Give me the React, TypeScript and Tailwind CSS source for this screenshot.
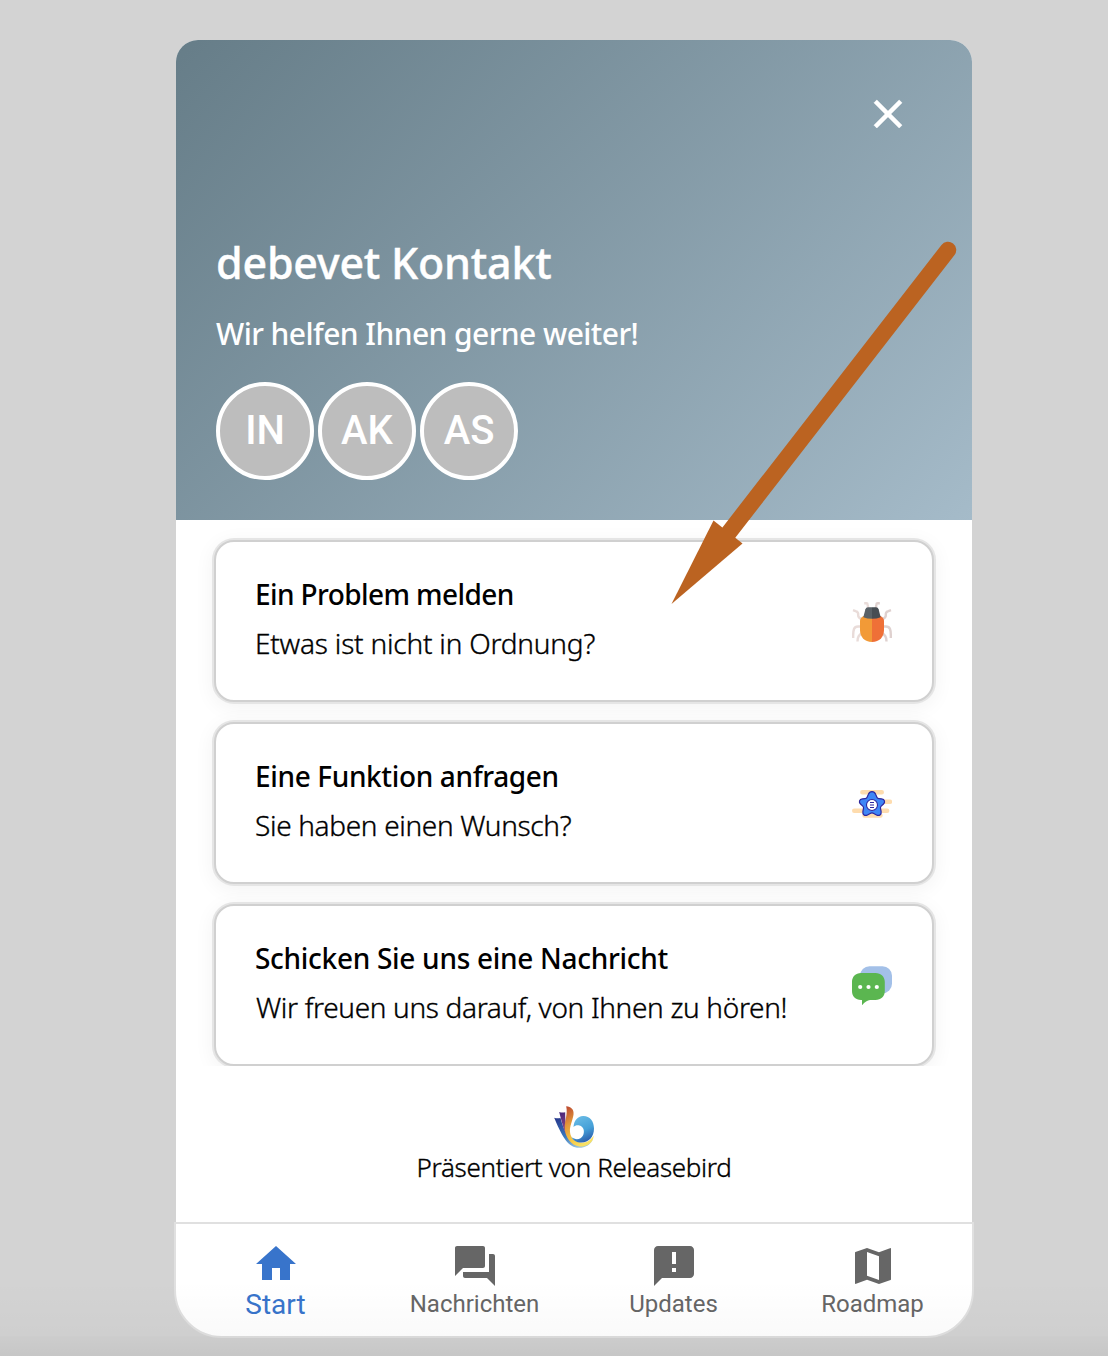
import React from "react";

const cards = [
  {
    title: "Ein Problem melden",
    titleClass: "-ml-px tracking-[-0.6px]",
    text: "Etwas ist nicht in Ordnung?",
    textClass: "-ml-px tracking-[-0.2px]",
    icon: <BugIcon />,
  },
  {
    title: "Eine Funktion anfragen",
    titleClass: "-ml-px tracking-[-0.36px]",
    text: "Sie haben einen Wunsch?",
    textClass: "-ml-px tracking-[-0.33px]",
    icon: <StarIcon />,
  },
  {
    title: "Schicken Sie uns eine Nachricht",
    titleClass: "-ml-px tracking-[-0.29px]",
    text: "Wir freuen uns darauf, von Ihnen zu hören!",
    textClass: "tracking-[-0.33px]",
    icon: <ChatIcon />,
  },
];

const tabs = [
  { label: "Nachrichten", path: "M21 6h-2v9H6v2c0 .55.45 1 1 1h11l4 4V7c0-.55-.45-1-1-1zm-4 6V3c0-.55-.45-1-1-1H3c-.55 0-1 .45-1 1v14l4-4h10c.55 0 1-.45 1-1z" },
  { label: "Updates", path: "M20 2H4c-1.1 0-2 .9-2 2v18l4-4h14c1.1 0 2-.9 2-2V4c0-1.1-.9-2-2-2zm-7 13h-2v-2h2v2zm0-4h-2V5h2v6z" },
  { label: "Roadmap", path: "M20.8 3L15 5.1 9 3 3.2 4.95 3 5.2v15.6l.2.2L9 18.9l6 2.1 5.8-1.95.2-.25V3.2L20.8 3zM15 19l-6-2.11V5l6 2.11V19z" },
];

function BugIcon() {
  return (
    <svg viewBox="0 0 40 40" className="size-10" fill="none">
      <g stroke="#e9dcd9" strokeWidth="2.4" strokeLinejoin="round">
        <path d="M12.2 1.2h2.3q1 0 1.1 1.2l.6 4" />
        <path d="M10 17q-4-1-3.8-4t-2-3.6L1 8.2" />
        <path d="M9 24.5H6q-3 0-4 2.5T1.2 36" />
        <path d="M10 31.5q-4.5 1.5-4.500 8" />
      </g>
      <g stroke="#dfd1cf" strokeWidth="2.4" strokeLinejoin="round">
        <path d="M27.8 1.2h-2.3q-1 0-1.1 1.2l-.6 4" />
        <path d="M30 17q4-1 3.8-4t2-3.6L39 8.2" />
        <path d="M31 24.5h3q3 0 4 2.5t.8 9" />
        <path d="M30 31.5q4.5 1.500 4.500 8" />
      </g>
      <path d="M20 14h-8.500Q8 16 8 19v9c0 7 4.500 12 12 12z" fill="#f29a37" />
      <path d="M20 14h8.500Q32 16 32 19v9c0 7-4.500 12-12 12z" fill="#ef7037" />
      <path d="M20 5.3h-4q-2 0-2.600 2l-2.100 8q4 1.500 8.700 1.500z" fill="#596167" />
      <path d="M20 5.3h4q2 0 2.600 2l2.100 8q-4 1.500-8.700 1.500z" fill="#464d53" />
    </svg>
  );
}

function StarIcon() {
  return (
    <svg viewBox="0 0 40 40" className="size-10" fill="none">
      <g stroke="#fedcae" strokeWidth="4.4" strokeLinecap="round">
        <path d="M10.300 8.200h19.500M9 17.800h29M2.200 26.800h33M12.500 31.600h16" />
      </g>
      <path
        d="M20 7.600c2 0 3 1 3.600 2.600l1.300 3c.4.900 1 1.300 2 1.400l2.700.3c3.200.4 3.800 3.300 1.900 5.100l-2.300 2.100c-.7.700-.9 1.400-.7 2.300l.6 3c.6 3.200-2 5-4.600 3.500l-2.700-1.500c-1.200-.7-2.400-.7-3.600 0l-2.700 1.500c-2.600 1.500-5.200-.3-4.600-3.500l.6-3c.2-.9 0-1.600-.7-2.300l-2.300-2.100c-1.900-1.800-1.300-4.700 1.900-5.100l2.700-.3c1-.1 1.600-.5 2-1.400l1.300-3C17 8.600 18 7.600 20 7.600z"
        fill="#3f86f6"
        stroke="#2d279f"
        strokeWidth="1.2"
      />
      <circle cx="20" cy="21" r="5.5" fill="#fff" stroke="#2d279f" strokeWidth="1.1" />
      <path d="M18 18.500h4M18 21h4M18 23.500h4" stroke="#2d279f" strokeWidth="1.2" />
    </svg>
  );
}

function ChatIcon() {
  return (
    <svg viewBox="0 0 40 40" className="size-10">
      <rect x="8" y=".3" width="32" height="27" rx="9.5" fill="#a3c0e8" />
      <path d="M9 7h14.500c5.500 0 9.300 3.800 9.300 9v9c0 5.300-3.800 9-9.300 9H18c-2.500.4-5.200 2-8 5.200V34H9c-5.400 0-9-3.700-9-9v-9c0-5.200 3.600-9 9-9z" fill="#5bb650" />
      <g fill="#fff">
        <circle cx="8.2" cy="21" r="2.1" />
        <circle cx="16.5" cy="21" r="2.1" />
        <circle cx="24.8" cy="21" r="2.1" />
      </g>
    </svg>
  );
}

function BirdLogo() {
  return (
    <svg viewBox="0 0 40 42" className="h-[42px] w-10">
      <defs>
        <linearGradient id="flame" x1="0" y1="0" x2=".5" y2="1">
          <stop offset="0" stopColor="#b8412f" />
          <stop offset=".4" stopColor="#e29639" />
          <stop offset=".8" stopColor="#f6ca45" />
          <stop offset="1" stopColor="#f8e063" />
        </linearGradient>
        <linearGradient id="body" x1=".3" y1="0" x2=".7" y2="1">
          <stop offset="0" stopColor="#69bbe5" />
          <stop offset=".55" stopColor="#45a0d8" />
          <stop offset="1" stopColor="#2a58a8" />
        </linearGradient>
        <linearGradient id="navy" x1="0" y1="0" x2=".6" y2="1">
          <stop offset="0" stopColor="#26358a" />
          <stop offset=".6" stopColor="#397bc0" />
          <stop offset="1" stopColor="#9bc5df" />
        </linearGradient>
        <linearGradient id="plum" x1="0" y1="0" x2=".5" y2="1">
          <stop offset="0" stopColor="#43227a" />
          <stop offset=".5" stopColor="#8c4a87" />
          <stop offset="1" stopColor="#e4a189" />
        </linearGradient>
      </defs>
      <path d="M.2 11.800q3 1 6.300.1C10 25 15 36 24 38.500c7 1.500 12-.5 15-5-3 6-9 9-16 8.200C13 40.500 7 28 .2 11.800z" fill="url(#navy)" />
      <path d="M5.200 6q3 1 6 .2C11 22 15 35 24 37.500c7 1 11-1 15-5-3.500 6-9 8.500-15 7.500C12 37.500 9 20 5.200 6z" fill="url(#plum)" />
      <path d="M12.200.2c5 .5 8 3 7.300 8.500C18.500 15 15.500 20 16 26c.6 6 4.500 9.500 10 10.500 5.500.7 10-1.500 13.800-7-.8 8-7.300 11.500-14.300 11C17 39.500 11 31 10.700 22 10.500 15 14 8 12.200.2z" fill="url(#flame)" />
      <path d="M19.500 21c.5-6.500 4-10.500 9.500-11 6.500-.3 11 5 11 12.500 0 8.500-5.500 14-12.500 14-5 0-8.500-2-10-5.500 4 3.500 9.500 2.500 11.500-1.500 2-4.300.6-9-3.500-10-2.500-.5-4.500 0-6 1.500z" fill="url(#body)" />
    </svg>
  );
}

export default function App() {
  return (
    <div className="relative flex h-[1356px] w-[1108px] flex-col overflow-hidden bg-[#d3d3d3] pt-10 pl-[174px] font-['Noto_Sans',sans-serif] text-black">
      <main className="ml-0.5 flex h-[1182px] w-[796px] flex-col overflow-hidden rounded-t-[22px] bg-white">
        <header className="flex h-[480px] shrink-0 flex-col bg-linear-135 from-[#667d88] to-[#a5bbc9] px-10 pt-[50px] text-white">
          <button className="mr-5 self-end" aria-label="Schließen">
            <svg viewBox="0 0 24 24" className="size-12" fill="currentColor" stroke="currentColor" strokeWidth="0.3">
              <path d="M19 6.410 17.590 5 12 10.590 6.410 5 5 6.410 10.590 12 5 17.590 6.410 19 12 13.410 17.590 19 19 17.590 13.410 12z" />
            </svg>
          </button>
          <h1 className="mt-[94px] text-[43px] leading-[62px] font-medium tracking-[-0.22px] whitespace-nowrap [-webkit-text-stroke:0.4px_white]">debevet Kontakt</h1>
          <p className="mt-5 text-[30px] leading-10 font-medium tracking-[-0.56px] whitespace-nowrap">Wir helfen Ihnen gerne weiter!</p>
          <div className="mt-7 flex gap-1">
            {["IN", "AK", "AS"].map((name) => (
              <div key={name} className="flex size-[98px] items-center justify-center rounded-full border-4 border-white bg-[#bdbdbd] font-['Roboto',sans-serif] text-[40px] leading-10 font-medium">
                {name}
              </div>
            ))}
          </div>
        </header>
        <section className="flex h-[546px] shrink-0 flex-col gap-5 overflow-hidden px-[38px] pt-5">
          {cards.map((card) => (
            <article key={card.title} className="flex h-[162px] shrink-0 items-center justify-between rounded-[20px] border-2 border-[#d0d0d0] bg-white px-10 shadow-[0_0_0_2px_#e5e5e5,0_4px_20px_2px_rgba(0,0,0,0.05)]">
              <div className="mb-1.5 whitespace-nowrap">
                <h2 className={"text-[28px] leading-10 font-medium " + card.titleClass}>{card.title}</h2>
                <p className={"mt-[9px] text-[28px] leading-10 font-light [-webkit-text-stroke:0.35px_black] " + card.textClass}>{card.text}</p>
              </div>
              <div className="mt-0.5">{card.icon}</div>
            </article>
          ))}
        </section>
        <footer className="flex flex-col items-center pt-10">
          <BirdLogo />
          <p className="-mt-px text-[26px] leading-10 font-light tracking-[-0.33px] whitespace-nowrap [-webkit-text-stroke:0.35px_black]">Präsentiert von Releasebird</p>
        </footer>
      </main>
      <nav className="grid h-[116px] w-[800px] grid-cols-4 rounded-b-[48px] border-2 border-[#e0e0e0] bg-white font-['Roboto',sans-serif] text-[#666666]">
        <div className="flex flex-col items-center pt-4 text-[#3874cb]">
          <svg viewBox="0 0 24 24" className="size-12" fill="currentColor">
            <path d="M10 20v-6h4v6h5v-8h3L12 3 2 12h3v8z" />
          </svg>
          <span className="mt-px text-[28px] leading-8">Start</span>
        </div>
        {tabs.map((tab) => (
          <div key={tab.label} className="flex flex-col items-center pt-[18px]">
            <svg viewBox="0 0 24 24" className="size-12" fill="currentColor">
              <path d={tab.path} />
            </svg>
            <span className="text-2xl leading-7">{tab.label}</span>
          </div>
        ))}
      </nav>
      <svg viewBox="0 0 300 370" className="pointer-events-none absolute top-[238px] left-[664px] h-[370px] w-[300px]" fill="#bb6321">
        <path d="M284 12 63 297" stroke="#bb6321" strokeWidth="16.5" strokeLinecap="round" />
        <path d="M7.500 366 49.500 282.500 78.500 305.500z" />
      </svg>
      <div className="pointer-events-none absolute inset-x-0 bottom-5 h-14 bg-linear-to-b from-transparent to-black/2" />
      <div className="pointer-events-none absolute inset-x-0 bottom-0 h-5 bg-linear-to-b from-black/3 to-black/6" />
    </div>
  );
}
